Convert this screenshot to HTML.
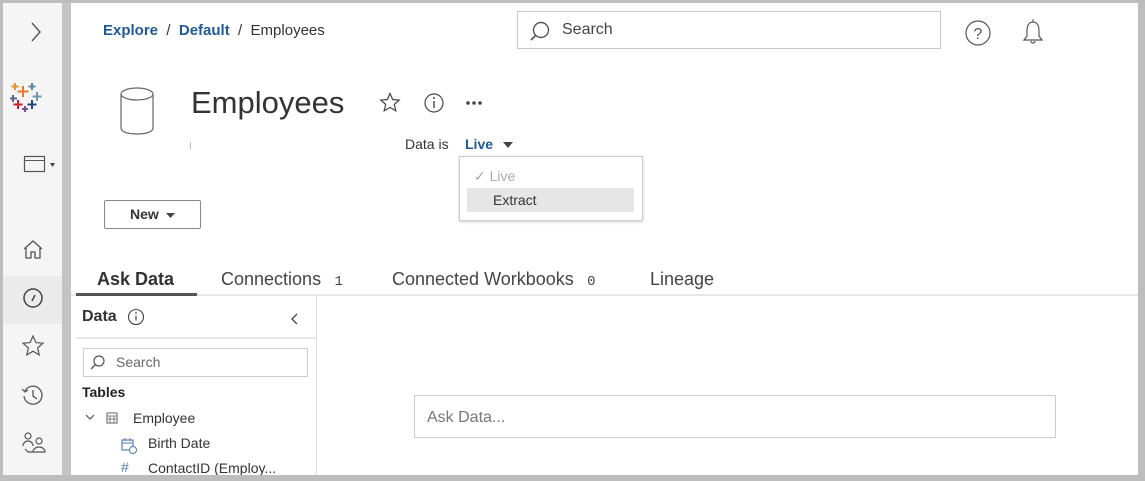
<!DOCTYPE html>
<html><head><style>
*{margin:0;padding:0;box-sizing:border-box}
body{width:1145px;height:481px;overflow:hidden;background:#bdbdbd;font-family:"Liberation Sans",sans-serif;color:#333;position:relative}
.a{position:absolute}
#frame{left:3px;top:3px;width:1135px;height:472px;background:#fff;overflow:hidden}
#side{left:0;top:0;width:59px;height:472px;background:#f5f5f5}
#bar{left:59px;top:0;width:9px;height:472px;background:#c4c4c4}
svg{position:absolute}
.t{white-space:nowrap}
</style></head><body>
<div id="frame" class="a">
 <div id="side" class="a">
  <div class="a" style="left:0;top:273px;width:59px;height:48px;background:#ebebeb"></div>
 </div>
 <div id="bar" class="a"></div>
 <svg style="left:26px;top:18px" width="14" height="22"><path d="M3 2 L11 11 L3 20" fill="none" stroke="#555" stroke-width="1.4"/></svg>
 <svg style="left:7px;top:79px" width="36" height="32">
  <g stroke-width="2">
   <path d="M13 4v11M7.5 9.5h11" stroke="#e8762d"/>
   <path d="M22 1v7M18.5 4.5h7" stroke="#59879b"/>
   <path d="M5 1v7M1.5 4.5h7" stroke="#eb912c"/>
   <path d="M3 13v7M0 16.5h7" stroke="#5b6591"/>
   <path d="M27 10v9M22.5 14.5h9" stroke="#7099a6"/>
   <path d="M8 18v9M3.5 22.5h9" stroke="#c72035"/>
   <path d="M22 18v9M17.5 22.5h9" stroke="#1f447e"/>
   <path d="M15 24v6M12 27h6" stroke="#7b4f94"/>
  </g></svg>
 <svg style="left:20px;top:152px" width="34" height="20"><rect x="1.5" y="1.5" width="20" height="15" fill="none" stroke="#555" stroke-width="1.2"/><path d="M1.5 5.5h20" stroke="#555"/><path d="M27 8h5l-2.5 4z" fill="#444"/></svg>
 <svg style="left:19px;top:236px" width="22" height="22"><path d="M2 10 L11 2 L20 10 M4 9v10h5v-6h4v6h5V9" fill="none" stroke="#555" stroke-width="1.3"/></svg>
 <svg style="left:19px;top:284px" width="22" height="22"><circle cx="11" cy="11" r="9" fill="none" stroke="#444" stroke-width="1.5"/><path d="M13 8l-3 6" stroke="#444" stroke-width="1.5"/></svg>
 <svg style="left:18px;top:331px" width="24" height="24"><path d="M12 2l2.9 6.6 7.1.6-5.4 4.7 1.6 7-6.2-3.7-6.2 3.7 1.6-7L2 9.2l7.1-.6z" fill="none" stroke="#555" stroke-width="1.2"/></svg>
 <svg style="left:18px;top:380px" width="24" height="24"><path d="M4 8 A9 9 0 1 1 3 13" fill="none" stroke="#555" stroke-width="1.3"/><path d="M1 6l3 3 3-2" fill="none" stroke="#555" stroke-width="1.2"/><path d="M12 7v6l4 3" fill="none" stroke="#555" stroke-width="1.3"/></svg>
 <svg style="left:18px;top:428px" width="26" height="26"><circle cx="7" cy="5" r="3" fill="none" stroke="#555" stroke-width="1.2"/><circle cx="18" cy="10" r="3" fill="none" stroke="#555" stroke-width="1.2"/><path d="M2 15a5 5 0 0 1 10 0M12 21a6 5 0 0 1 12 0h-12M4 18l3 3h5" fill="none" stroke="#555" stroke-width="1.2"/></svg>

 <div class="a t" style="left:100px;top:19px;font-size:15px"><b style="color:#1f5a96;font-weight:bold">Explore</b> &nbsp;/&nbsp; <b style="color:#1f5a96">Default</b> &nbsp;/&nbsp; Employees</div>
 <div class="a" style="left:514px;top:8px;width:424px;height:38px;border:1px solid #c8c8c8"></div>
 <svg style="left:524px;top:17px" width="24" height="24"><circle cx="14" cy="10" r="7.5" fill="none" stroke="#555" stroke-width="1.4"/><path d="M9 15l-5 5" stroke="#555" stroke-width="1.6"/></svg>
 <div class="a t" style="left:559px;top:18px;font-size:16px;color:#444">Search</div>
 <svg style="left:961px;top:16px" width="28" height="28"><circle cx="14" cy="14" r="12" fill="none" stroke="#555" stroke-width="1.2"/><text x="14" y="20" font-size="16" text-anchor="middle" fill="#555" font-family="Liberation Sans">?</text></svg>
 <svg style="left:1017px;top:15px" width="26" height="30"><path d="M13 4c-5 0-6 5-6 9v5l-3 4h18l-3-4v-5c0-4-1-9-6-9z" fill="none" stroke="#555" stroke-width="1.2"/><path d="M11 23a2 2 0 0 0 4 0" fill="none" stroke="#555" stroke-width="1.2"/><path d="M13 1v3" stroke="#555"/></svg>

 <svg style="left:115px;top:82px" width="40" height="54"><ellipse cx="19" cy="9" rx="16" ry="6" fill="none" stroke="#666" stroke-width="1.2"/><path d="M3 9v34c0 4 7 6 16 6s16-2 16-6V9" fill="none" stroke="#666" stroke-width="1.2"/></svg>
 <div class="a t" style="left:188px;top:82px;font-size:31px;color:#333">Employees</div>
 <div class="a" style="left:187px;top:139px;width:1px;height:7px;background:#bbb"></div>
 <svg style="left:376px;top:89px" width="22" height="22"><path d="M11 1.5l2.7 6 6.5.6-4.9 4.3 1.5 6.4L11 15.4l-5.8 3.4 1.5-6.4L1.8 8.1l6.5-.6z" fill="none" stroke="#444" stroke-width="1.2"/></svg>
 <svg style="left:420px;top:89px" width="22" height="22"><circle cx="11" cy="11" r="9" fill="none" stroke="#444" stroke-width="1.2"/><path d="M11 9v7" stroke="#444" stroke-width="1.4"/><circle cx="11" cy="6" r="1" fill="#444"/></svg>
 <svg style="left:462px;top:97px" width="20" height="6"><circle cx="3" cy="3" r="1.8" fill="#444"/><circle cx="9" cy="3" r="1.8" fill="#444"/><circle cx="15" cy="3" r="1.8" fill="#444"/></svg>
 <div class="a t" style="left:402px;top:133px;font-size:14px;color:#333">Data is</div>
 <div class="a t" style="left:462px;top:133px;font-size:14px;color:#1f5a96;font-weight:bold">Live</div>
 <svg style="left:499px;top:137px" width="12" height="10"><path d="M1 2h10l-5 6z" fill="#444"/></svg>
 <div class="a" style="left:456px;top:153px;width:184px;height:65px;background:#fff;border:1px solid #ccc;box-shadow:0 1px 3px rgba(0,0,0,.2)"></div>
 <div class="a t" style="left:471px;top:165px;font-size:14px;color:#aaa">✓ Live</div>
 <div class="a" style="left:464px;top:185px;width:167px;height:24px;background:#e6e6e6"></div>
 <div class="a t" style="left:490px;top:189px;font-size:14px;color:#333">Extract</div>
 <div class="a" style="left:101px;top:197px;width:97px;height:29px;border:1px solid #888;border-radius:2px"></div>
 <div class="a t" style="left:127px;top:203px;font-size:14px;font-weight:bold;color:#333">New</div>
 <svg style="left:163px;top:209px" width="10" height="8"><path d="M0 1h9l-4.5 5z" fill="#444"/></svg>

 <div class="a" style="left:68px;top:291px;width:1067px;height:2px;background:#e6e6e6"></div>
 <div class="a" style="left:73px;top:290px;width:121px;height:3px;background:#555"></div>
 <div class="a t" style="left:94px;top:266px;font-size:18px;font-weight:bold;color:#333">Ask Data</div>
 <div class="a t" style="left:218px;top:266px;font-size:18px;color:#444">Connections <span style="font-size:14px;font-family:'Liberation Mono',monospace">&nbsp;1</span></div>
 <div class="a t" style="left:389px;top:266px;font-size:18px;color:#444">Connected Workbooks <span style="font-size:14px;font-family:'Liberation Mono',monospace">&nbsp;0</span></div>
 <div class="a t" style="left:647px;top:266px;font-size:18px;color:#444">Lineage</div>

 <div class="a" style="left:313px;top:293px;width:1px;height:180px;background:#ddd"></div>
 <div class="a" style="left:73px;top:334px;width:240px;height:2px;background:#e6e6e6"></div>
 <div class="a t" style="left:79px;top:305px;font-size:16px;font-weight:bold;color:#333">Data</div>
 <svg style="left:124px;top:305px" width="18" height="18"><circle cx="9" cy="9" r="7.5" fill="none" stroke="#444" stroke-width="1.1"/><path d="M9 7.5v5" stroke="#444" stroke-width="1.2"/><circle cx="9" cy="5" r=".9" fill="#444"/></svg>
 <svg style="left:287px;top:309px" width="10" height="14"><path d="M7 2L2 7l5 5" fill="none" stroke="#444" stroke-width="1.3"/></svg>
 <div class="a" style="left:80px;top:345px;width:225px;height:29px;border:1px solid #ccc"></div>
 <svg style="left:86px;top:351px" width="18" height="18"><circle cx="10" cy="7" r="5" fill="none" stroke="#555" stroke-width="1.2"/><path d="M6.5 10.5L2 15" stroke="#555" stroke-width="1.3"/></svg>
 <div class="a t" style="left:113px;top:351px;font-size:14px;color:#666">Search</div>
 <div class="a t" style="left:79px;top:381px;font-size:14px;font-weight:bold;color:#222">Tables</div>
 <svg style="left:82px;top:410px" width="10" height="8"><path d="M1 2l4 4 4-4" fill="none" stroke="#555" stroke-width="1.2"/></svg>
 <svg style="left:103px;top:409px" width="12" height="12"><rect x="1" y="1" width="10" height="10" fill="none" stroke="#666"/><path d="M1 4h10M1 7h10M4 4v7M8 4v7" stroke="#666" stroke-width=".8"/></svg>
 <div class="a t" style="left:130px;top:407px;font-size:14px;color:#333">Employee</div>
 <svg style="left:118px;top:434px" width="18" height="18"><rect x="1" y="3" width="11" height="10" fill="none" stroke="#4b7bb5" stroke-width="1.1"/><path d="M1 6h11M4 1v3M9 1v3" stroke="#4b7bb5"/><circle cx="12" cy="13" r="3.5" fill="#fff" stroke="#4b7bb5"/></svg>
 <div class="a t" style="left:145px;top:432px;font-size:14px;color:#333">Birth Date</div>
 <div class="a t" style="left:118px;top:456px;font-size:14px;color:#4b7bb5">#</div>
 <div class="a t" style="left:145px;top:457px;font-size:14px;color:#333">ContactID (Employ...</div>

 <div class="a" style="left:411px;top:392px;width:642px;height:43px;border:1px solid #ccc"></div>
 <div class="a t" style="left:424px;top:406px;font-size:16px;color:#777">Ask Data...</div>
</div>
</body></html>
